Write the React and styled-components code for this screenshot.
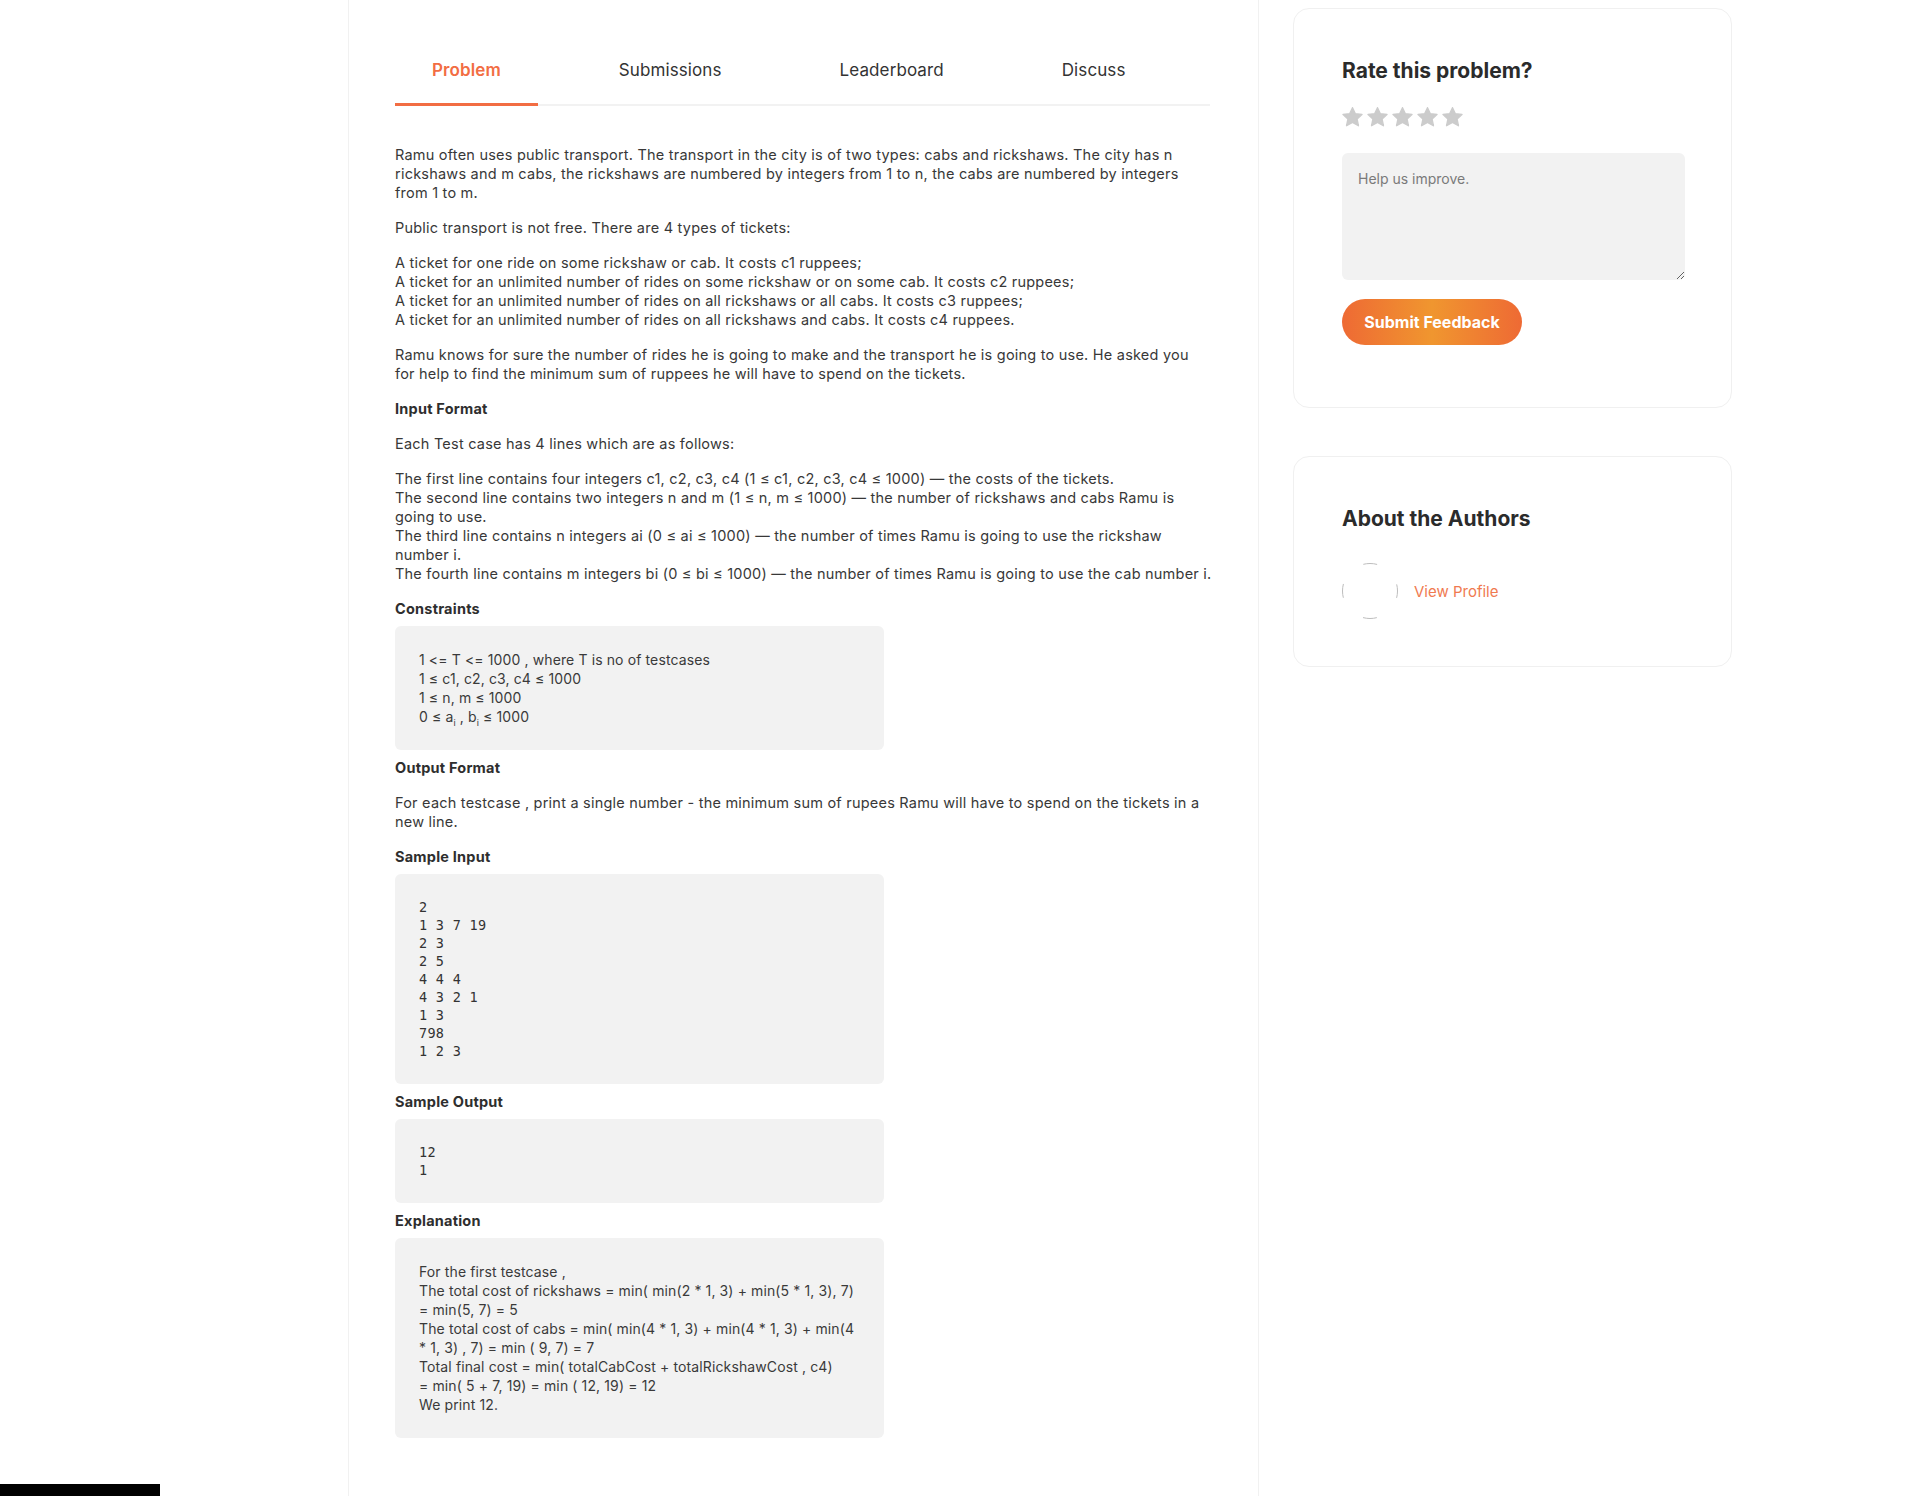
import React from "react";
import styled, { createGlobalStyle } from "styled-components";

const GlobalStyle = createGlobalStyle`
  html, body { margin: 0; padding: 0; background: #ffffff; }
  body {
    font-family: Inter, "Noto Sans", "Liberation Sans", sans-serif;
    color: #333333;
    -webkit-font-smoothing: antialiased;
  }
  * { box-sizing: border-box; }
`;

const Page = styled.div`
  display: flex;
  min-height: 100vh;
  align-items: stretch;
`;

const LeftGutter = styled.div`
  width: 348px;
  flex: 0 0 348px;
`;

const Main = styled.main`
  width: 911px;
  flex: 0 0 911px;
  border-left: 1px solid #f1f1f1;
  border-right: 1px solid #f1f1f1;
  padding: 60px 48px 40px 46px;
`;

const TabBar = styled.nav`
  display: flex;
  border-bottom: 2px solid #f2f2f2;
`;

const Tab = styled.button`
  all: unset;
  cursor: pointer;
  font-family: Inter, "Noto Sans", sans-serif;
  font-size: 17px;
  line-height: 20px;
  padding: 0 37px 23px;
  margin-right: 44px;
  margin-bottom: -2px;
  color: ${(p) => (p.$active ? "#f26d43" : "#333333")};
  font-weight: ${(p) => (p.$active ? 600 : 400)};
  border-bottom: 3px solid ${(p) => (p.$active ? "#f26d43" : "transparent")};
  letter-spacing: 0.1px;
`;

const Content = styled.article`
  margin-top: 39px;
  font-size: 14.5px;
  line-height: 19px;
  color: #383838;
  letter-spacing: 0.22px;
`;

const Para = styled.p`
  margin: 0 0 16px;
  white-space: nowrap;
`;

const Heading = styled.h4`
  margin: 0 0 ${(p) => (p.$tight ? "8px" : "16px")};
  font-size: 14.5px;
  line-height: 19px;
  font-weight: 700;
  color: #2e2e2e;
`;

const Box = styled.div`
  width: 489px;
  background: #f2f2f2;
  border-radius: 6px;
  padding: 24px;
  margin: 0 0 8px;
  white-space: nowrap;
  font-size: 14px;
  line-height: 19px;
  letter-spacing: 0.12px;
  color: #3a3a3a;
`;

const Sub = styled.sub`
  font-size: 9px;
  line-height: 0;
`;

const MonoBox = styled(Box).attrs({ as: "pre" })`
  white-space: pre;
  font-family: "DejaVu Sans Mono", "Liberation Mono", monospace;
  font-size: 13.5px;
  line-height: 18px;
  letter-spacing: 0.3px;
  color: #333333;
`;

const Sidebar = styled.aside`
  margin-left: 34px;
  padding-top: 8px;
  width: 439px;
  flex: 0 0 439px;
  display: flex;
  flex-direction: column;
  gap: 48px;
`;

const Card = styled.section`
  border: 1px solid #f0f0f0;
  border-radius: 16px;
  background: #ffffff;
  padding: ${(p) => p.$pad};
`;

const CardTitle = styled.h3`
  margin: 0;
  font-size: 21px;
  line-height: 24px;
  font-weight: 700;
  color: #2b2b2b;
  padding-top: 1px;
`;

const Stars = styled.div`
  display: flex;
  gap: 4px;
  margin-top: 24px;
`;

const Feedback = styled.textarea`
  display: block;
  margin-top: 26px;
  width: 343px;
  height: 127px;
  background: #f2f2f2;
  border: none;
  border-radius: 6px;
  padding: 17px 16px;
  font-family: Inter, "Noto Sans", sans-serif;
  font-size: 14px;
  color: #333;
  outline: none;
  &::placeholder { color: #7a7a7a; }
`;

const SubmitButton = styled.button`
  margin-top: 19px;
  width: 180px;
  height: 46px;
  border: none;
  border-radius: 23px;
  background: linear-gradient(90deg, #ee6a34 0%, #f0962f 50%, #ee6a34 100%);
  color: #ffffff;
  font-family: Inter, "Noto Sans", sans-serif;
  font-size: 16px;
  font-weight: 700;
  cursor: pointer;
`;

const AuthorRow = styled.div`
  display: flex;
  align-items: center;
  gap: 16px;
  margin-top: 32px;
`;

const ProfileLink = styled.a`
  color: #f07a50;
  font-size: 15px;
  text-decoration: none;
  cursor: pointer;
`;

const BottomBar = styled.div`
  position: fixed;
  left: 0;
  bottom: 0;
  width: 160px;
  height: 12px;
  background: #000000;
`;

const Star = () => (
  <svg width="21" height="20" viewBox="0 0 24 23" aria-hidden="true">
    <path
      d="M12 0.8l3.3 7 7.6 0.9-5.6 5.2 1.5 7.6L12 17.7l-6.8 3.8 1.5-7.6L1.1 8.7l7.6-0.9z"
      fill="#cccccc"
      strokeLinejoin="round"
      stroke="#cccccc"
      strokeWidth="1.6"
    />
  </svg>
);

const Avatar = () => (
  <svg width="56" height="56" viewBox="0 0 56 56" aria-hidden="true">
    <circle
      cx="28"
      cy="28"
      r="27.5"
      fill="none"
      stroke="#bdbdbd"
      strokeWidth="1"
      strokeDasharray="14 29.2"
      strokeDashoffset="7"
    />
  </svg>
);

const lines = (arr) =>
  arr.map((l, i) => (
    <React.Fragment key={i}>
      {l}
      {i < arr.length - 1 && <br />}
    </React.Fragment>
  ));

export default function App() {
  return (
    <>
      <GlobalStyle />
      <Page>
        <LeftGutter />
        <Main>
          <TabBar>
            <Tab $active>Problem</Tab>
            <Tab>Submissions</Tab>
            <Tab>Leaderboard</Tab>
            <Tab>Discuss</Tab>
          </TabBar>
          <Content>
            <Para>
              {lines([
                "Ramu often uses public transport. The transport in the city is of two types: cabs and rickshaws. The city has n",
                "rickshaws and m cabs, the rickshaws are numbered by integers from 1 to n, the cabs are numbered by integers",
                "from 1 to m.",
              ])}
            </Para>
            <Para>Public transport is not free. There are 4 types of tickets:</Para>
            <Para>
              {lines([
                "A ticket for one ride on some rickshaw or cab. It costs c1 ruppees;",
                "A ticket for an unlimited number of rides on some rickshaw or on some cab. It costs c2 ruppees;",
                "A ticket for an unlimited number of rides on all rickshaws or all cabs. It costs c3 ruppees;",
                "A ticket for an unlimited number of rides on all rickshaws and cabs. It costs c4 ruppees.",
              ])}
            </Para>
            <Para>
              {lines([
                "Ramu knows for sure the number of rides he is going to make and the transport he is going to use. He asked you",
                "for help to find the minimum sum of ruppees he will have to spend on the tickets.",
              ])}
            </Para>
            <Heading>Input Format</Heading>
            <Para>Each Test case has 4 lines which are as follows:</Para>
            <Para>
              {lines([
                "The first line contains four integers c1, c2, c3, c4 (1 ≤ c1, c2, c3, c4 ≤ 1000) — the costs of the tickets.",
                "The second line contains two integers n and m (1 ≤ n, m ≤ 1000) — the number of rickshaws and cabs Ramu is",
                "going to use.",
                "The third line contains n integers ai (0 ≤ ai ≤ 1000) — the number of times Ramu is going to use the rickshaw",
                "number i.",
                "The fourth line contains m integers bi (0 ≤ bi ≤ 1000) — the number of times Ramu is going to use the cab number i.",
              ])}
            </Para>
            <Heading $tight>Constraints</Heading>
            <Box>
              1 &lt;= T &lt;= 1000 , where T is no of testcases
              <br />1 ≤ c1, c2, c3, c4 ≤ 1000
              <br />1 ≤ n, m ≤ 1000
              <br />0 ≤ a<Sub>i</Sub> , b<Sub>i</Sub> ≤ 1000
            </Box>
            <Heading>Output Format</Heading>
            <Para>
              {lines([
                "For each testcase , print a single number - the minimum sum of rupees Ramu will have to spend on the tickets in a",
                "new line.",
              ])}
            </Para>
            <Heading $tight>Sample Input</Heading>
            <MonoBox>{"2\n1 3 7 19\n2 3\n2 5\n4 4 4\n4 3 2 1\n1 3\n798\n1 2 3"}</MonoBox>
            <Heading $tight>Sample Output</Heading>
            <MonoBox>{"12\n1"}</MonoBox>
            <Heading $tight>Explanation</Heading>
            <Box>
              {lines([
                "For the first testcase ,",
                "The total cost of rickshaws = min( min(2 * 1, 3) + min(5 * 1, 3), 7)",
                "= min(5, 7) = 5",
                "The total cost of cabs = min( min(4 * 1, 3) + min(4 * 1, 3) + min(4",
                "* 1, 3) , 7) = min ( 9, 7) = 7",
                "Total final cost = min( totalCabCost + totalRickshawCost , c4)",
                "= min( 5 + 7, 19) = min ( 12, 19) = 12",
                "We print 12.",
              ])}
            </Box>
          </Content>
        </Main>
        <Sidebar>
          <Card $pad="49px 46px 62px 48px">
            <CardTitle>Rate this problem?</CardTitle>
            <Stars>
              <Star />
              <Star />
              <Star />
              <Star />
              <Star />
            </Stars>
            <Feedback placeholder="Help us improve." />
            <SubmitButton>Submit Feedback</SubmitButton>
          </Card>
          <Card $pad="49px 46px 47px 48px">
            <CardTitle>About the Authors</CardTitle>
            <AuthorRow>
              <Avatar />
              <ProfileLink>View Profile</ProfileLink>
            </AuthorRow>
          </Card>
        </Sidebar>
      </Page>
      <BottomBar />
    </>
  );
}
